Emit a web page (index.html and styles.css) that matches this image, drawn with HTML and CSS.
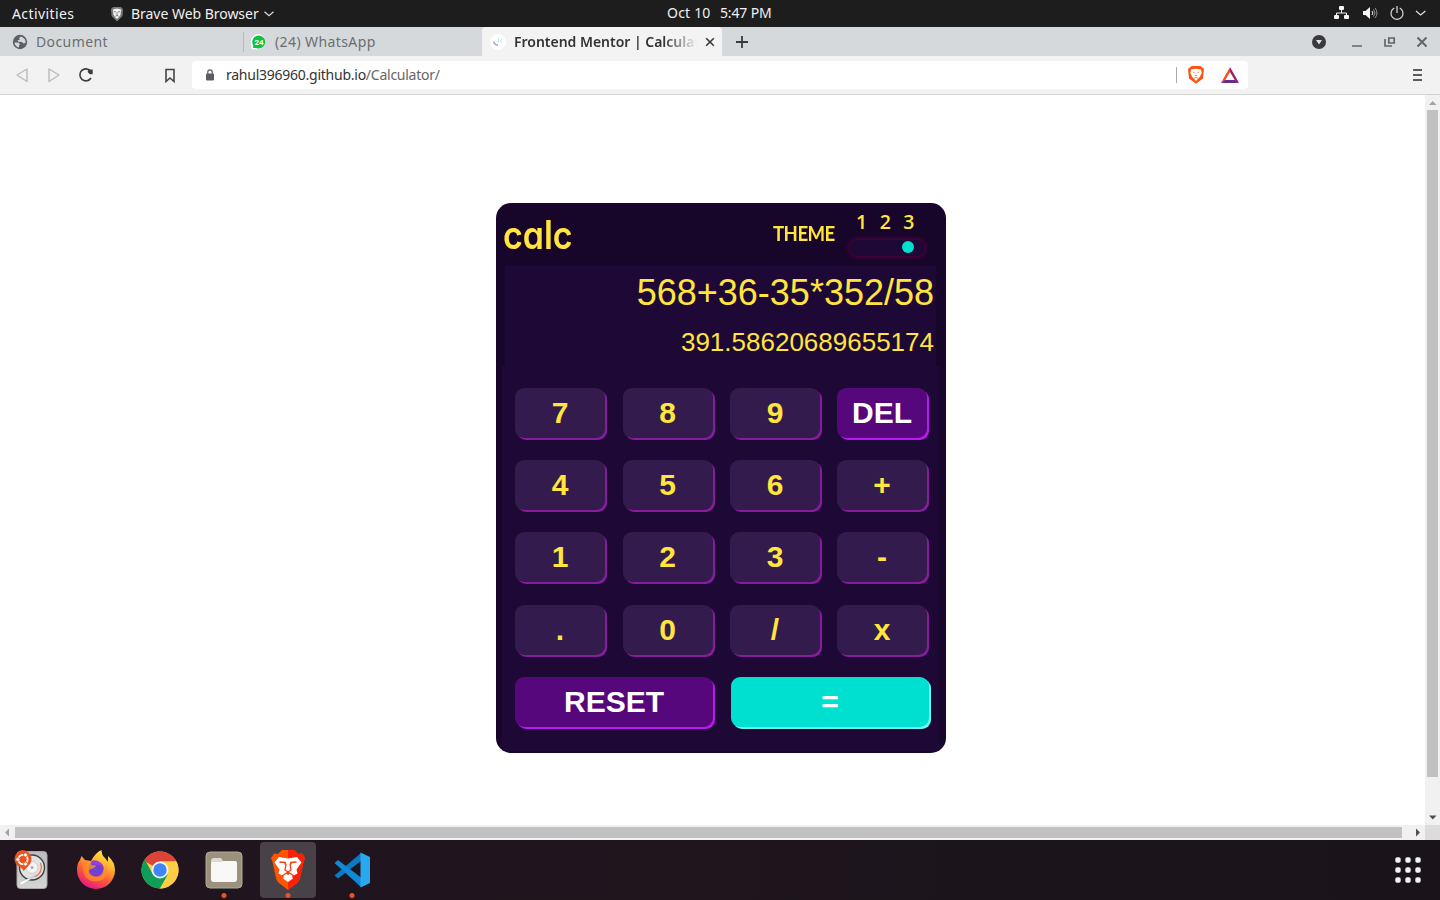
FILE: index.html
```html
<!DOCTYPE html>
<html lang="en">
<head>
<meta charset="utf-8">
<title>Frontend Mentor | Calculator app</title>
<link rel="stylesheet" href="styles.css">
</head>
<body>
<header class="topbar">
  <span class="activities">Activities</span>
  <svg class="app-icon" width="14" height="16" viewBox="0 0 14 16"><path d="M3 1h8l2 2-.5 7L7 15.500 1.500 10 1 3z" fill="#77797b"/><path d="M3 3.500 7 2.500l4 1-.5 5L9 11l-2 2-2-2-1.500-2.500z" fill="#f4f4f4"/><path d="M4 5.500l2 .5M10 5.500 8 6M7 6v3M5.300 10.300 7 9.300l1.700 1" stroke="#666" stroke-width=".8" fill="none"/></svg>
  <span class="app-name">Brave Web Browser</span>
  <svg class="app-chevron" width="10" height="6" viewBox="0 0 10 6"><path d="M.5.800 5 4.800 9.500.800" fill="none" stroke="#ddd" stroke-width="1.200"/></svg>
  <span class="clock"><span class="date">Oct 10</span><span class="time">5:47 PM</span></span>
  <svg class="tray" width="100" height="16" viewBox="0 0 100 16">
    <g fill="#f5f5f5"><rect x="6" y="0" width="5" height="4" rx="1"/><rect x="1" y="9" width="5" height="4" rx="1"/><rect x="11" y="9" width="5" height="4" rx="1"/><path d="M30 5h2.500L37 1v12l-4.500-4H30z"/></g>
    <path d="M8.500 4v3M3.500 9.500V7h10v2.500M39 5q1.800 2 0 4" fill="none" stroke="#f5f5f5"/><path d="M40.500 3.500q3 3.500 0 7M42 2q4 5 0 10" fill="none" stroke="#999"/>
    <path d="M61.300 2A6 6 0 1 0 66.700 2M64 0v7" fill="none" stroke="#ddd" stroke-width="1.200"/><path d="M83 5l4.700 4 4.700-4" fill="none" stroke="#ddd" stroke-width="1.300"/>
  </svg>
</header>

<nav class="tabs">
  <div class="tab tab-document">
    <svg width="16" height="16" viewBox="0 0 16 16"><circle cx="8" cy="8" r="7.200" fill="#5b6066"/><path d="M2.500 8.500h4l1.500 1.700-1 1.300v2q-4-.8-4.500-5zM8.500 2.500 7 4.500l1 1.500H5.500l1 1.700L10 8l1.500 1.500 2-.5q.8-5-5-6.500z" fill="#d5d8db"/></svg>
    <span class="tab-title t-document">Document</span>
  </div>
  <div class="tab tab-whatsapp">
    <svg width="16" height="16" viewBox="0 0 16 16"><path d="M8 .300A7.600 7.600 0 1 1 5 15.200H.500V11.500A7.600 7.600 0 0 1 8 .300z" fill="#fff"/><path d="M8 1.500A6.500 6.500 0 1 1 5 13.900l-3 .2.300-2.600A6.500 6.500 0 0 1 8 1.500z" fill="#0ec244"/><text x="8" y="10.800" text-anchor="middle" class="badge-text">24</text></svg>
    <span class="tab-title t-whatsapp">(24) WhatsApp</span>
  </div>
  <div class="tab tab-active">
    <svg width="16" height="16" viewBox="0 0 16 16"><circle cx="8" cy="8" r="8" fill="#fff"/><path d="M3.500 7.500Q4.500 11 8 11.200" fill="none" stroke="#9aa5dc" stroke-width="1.400"/><path d="M8.500 4.500v4M10 7l2-1.500M10 7l2 1.500" fill="none" stroke="#b8e2e8"/></svg>
    <span class="tab-title t-frontend">Frontend Mentor | Calculat</span>
    <svg class="tab-close" width="10" height="10" viewBox="0 0 10 10"><path d="M1.200 1.200l7.600 7.600M8.800 1.200 1.200 8.800" stroke="#3a3a3a" stroke-width="1.600"/></svg>
  </div>
  <svg class="new-tab" width="12" height="12" viewBox="0 0 12 12"><path d="M6 0v12M0 6h12" stroke="#3a3a3a" stroke-width="1.800"/></svg>
  <svg class="window-controls" width="120" height="16" viewBox="0 0 120 16">
    <circle cx="7" cy="8" r="7" fill="#3a3a3c"/><path d="M4 6h6l-3 4.500z" fill="#dfe2e5"/>
    <path d="M40 12h10M73 5v7h7M76.800 4h5.400v5h-5.400z" stroke="#646668" stroke-width="1.700" fill="none"/><path d="M105.500 3.500l9 9M114.500 3.500l-9 9" stroke="#646668" stroke-width="2"/>
  </svg>
</nav>

<div class="toolbar">
  <svg class="nav-icons" width="192" height="38" viewBox="0 0 192 38">
    <g fill="none" stroke="#bbb" stroke-width="1.400" stroke-linejoin="round"><path d="M27 13v12.500L17 19z"/><path d="M49 13v12.500L59 19z"/></g>
    <path d="M90.500 15A6 6 0 1 0 91 22" fill="none" stroke="#3d3d3d" stroke-width="1.600"/><path d="M88 16.500a2 2 0 0 1 2-3h2.700v4.700H90z" fill="#3d3d3d"/>
    <path d="M166 13.500h8v12l-4-3.500-4 3.500z" fill="none" stroke="#444" stroke-width="1.600"/>
  </svg>
  <div class="address">
    <svg width="8" height="12" viewBox="0 0 8 12"><rect y="4.500" width="8" height="7" rx="1" fill="#5a5d61"/><path d="M1.800 5V3a2.200 2.200 0 0 1 4.400 0v2" fill="none" stroke="#5a5d61" stroke-width="1.200"/></svg>
    <span class="url">rahul396960.github.io<span class="url-path">/Calculator/</span></span>
    <svg class="address-icons" width="64" height="20" viewBox="0 0 64 20">
      <path d="M.5 2v16" stroke="#aaa"/><path d="M15.500 1h9l3.500 3-1 9.500L20 18.800l-7-5.300L12 4z" fill="#fb5414"/><path d="M15 4.500l5-.7 5 .7.700 3.500-2 4-3.700 4-3.700-4-2-4z" fill="#fff"/><path d="M16.800 7l1.700.6M23.200 7l-1.700.6M18.800 10.500h2.400M18 13.500l2-1.500 2 1.500" stroke="#fb7a4a" stroke-width=".9" fill="none"/>
      <path d="M54 2 45 18l4-2.500 5-8.500z" fill="#ff4a1c"/><path d="M54 2l9 16-4-2.500-5-8.500z" fill="#9e1f63"/><path d="M45 18h18l-4-3H49z" fill="#662d91"/>
    </svg>
  </div>
  <svg class="menu" width="10" height="14" viewBox="0 0 10 14"><path d="M1 2h8M0 7h9M0 12h9" stroke="#5c5c5c" stroke-width="1.800"/><path d="M0 2h9" stroke="#5c5c5c" stroke-width="1.800"/></svg>
</div>

<main class="viewport">
  <div class="page">
    <section class="calculator">
      <div class="calc-header">
        <h1 class="logo">calc</h1>
        <span class="theme-label">THEME</span>
        <div class="theme">
          <div class="theme-numbers"><span>1</span><span>2</span><span>3</span></div>
          <div class="toggle"><span class="toggle-dot"></span></div>
        </div>
      </div>
      <div class="display">
        <div class="expression">568+36-35*352/58</div>
        <div class="result">391.58620689655174</div>
      </div>
      <div class="keypad">
        <button class="key">7</button><button class="key">8</button><button class="key">9</button><button class="key key-purple">DEL</button>
        <button class="key">4</button><button class="key">5</button><button class="key">6</button><button class="key">+</button>
        <button class="key">1</button><button class="key">2</button><button class="key">3</button><button class="key">-</button>
        <button class="key">.</button><button class="key">0</button><button class="key">/</button><button class="key">x</button>
        <button class="key key-purple key-wide">RESET</button><button class="key key-equals key-wide">=</button>
      </div>
    </section>
  </div>
  <div class="scroll-y">
    <svg width="15" height="15" viewBox="0 0 15 15"><path d="M4 10h7.500L7.750 6z" fill="#a3a3a3"/></svg>
    <div class="thumb-y"></div>
    <svg width="15" height="15" viewBox="0 0 15 15"><path d="M4 5.500h7.500L7.750 9.500z" fill="#505050"/></svg>
  </div>
  <div class="scroll-x">
    <svg width="15" height="15" viewBox="0 0 15 15"><path d="M9 3.500v8L5 7.500z" fill="#a3a3a3"/></svg>
    <div class="thumb-x"></div>
    <svg width="15" height="15" viewBox="0 0 15 15"><path d="M6 3.500v8L10 7.500z" fill="#505050"/></svg>
  </div>
  <div class="corner"></div>
</main>

<footer class="dock">
  <div class="dock-item"><svg width="56" height="56" viewBox="0 0 56 56">
    <defs><linearGradient id="disk" x2="0" y2="1"><stop stop-color="#bcbcbc"/><stop offset="1" stop-color="#d5d5d5"/></linearGradient></defs>
    <rect x="13" y="9.500" width="30" height="37" rx="3.500" fill="url(#disk)" stroke="#aaa"/>
    <circle cx="28" cy="25.500" r="12.500" fill="#e1e1e1" stroke="#3f4145" stroke-width="1.400"/><circle cx="28" cy="25.500" r="6" fill="#f4f4f4" stroke="#ccc"/><circle cx="28" cy="25.500" r="1.500" fill="#aaa"/>
    <path d="M36.500 21a10 10 0 0 1-5.500 13.500" fill="none" stroke="#ed764d" stroke-width="1.300"/><path d="M31 34 17 39.500q-3 3.500 1 3.500z" fill="#fff" stroke="#aaa" stroke-width=".5"/>
    <path d="M18.500 8a9 9 0 0 1 9 9q0 5-7 11l-1 1q-1-3-6-5.500A9 9 0 0 1 18.500 8z" fill="#e95420"/><circle cx="19" cy="17.500" r="4.600" fill="none" stroke="#fff" stroke-width="1.800"/><g fill="#fff" stroke="#e95420" stroke-width=".8"><circle cx="21.500" cy="13" r="2"/><circle cx="13.800" cy="17.500" r="2"/><circle cx="21.500" cy="22" r="2"/></g>
  </svg></div>
  <div class="dock-item"><svg width="56" height="56" viewBox="0 0 56 56">
    <defs><linearGradient id="fox" x1=".8" y1="0" x2=".3" y2="1"><stop stop-color="#fff44f"/><stop offset=".35" stop-color="#ffb02e"/><stop offset=".65" stop-color="#ff5a38"/><stop offset="1" stop-color="#e31587"/></linearGradient></defs>
    <path d="M33.500 8q0 5 3.500 8l3 4v-6q7 6 7 14a19 19 0 0 1-38 0q0-7 3-10l1.500-4 3.500 4 6 1q4-8 10.500-11z" fill="url(#fox)"/>
    <circle cx="28" cy="27" r="7.500" fill="#7142d2"/><path d="M22 20q4-3 8-1 6 3 6 9-3-6-8-5z" fill="#9a3be0"/>
    <path d="M15 22q6-2 9 1l4 .5q0 2-5 3.500-3 1-2 4.500 6 6 13 2 5-4 3-12 6 9-2 16-10 5-17-2-4-6-3-13.500z" fill="#ff9226" opacity=".75"/>
  </svg></div>
  <div class="dock-item"><svg width="56" height="56" viewBox="0 0 56 56">
    <circle cx="28" cy="28" r="18.500" fill="#ffcd43"/><path d="M28 28 12 18.700A18.500 18.500 0 0 1 44.500 19.500H28z" fill="#db4437"/><path d="M12.800 17.500A18.500 18.500 0 0 0 28 46.500l8-13.900L20.500 31.500z" fill="#109d58"/><path d="M36 32.600 28 46.500A18.500 18.500 0 0 0 44.500 19.500H28z" fill="#ffcd43"/>
    <circle cx="28" cy="28" r="8.500" fill="#f2f2f2"/><circle cx="28" cy="28" r="6.700" fill="#4285f4"/>
  </svg></div>
  <div class="dock-item"><svg width="56" height="56" viewBox="0 0 56 56">
    <rect x="10" y="10" width="36" height="36" rx="4" fill="#9b927e" stroke="#b1aa98"/><path d="M15 19q0-3 3-3h7l2 3h12l2 2v17H15z" fill="#e0dacf"/><path d="M15 22q0-2 2-2h8l3-1h11q2 0 2 2v16q0 3-3 3H18q-3 0-3-3z" fill="#f8f8f7"/><circle cx="28" cy="53.500" r="2.500" fill="#e95420"/>
  </svg></div>
  <div class="dock-item dock-selected"><svg width="56" height="56" viewBox="0 0 56 56">
    <path d="M22 8h12l4 4 4-.5 3 4.500-1.500 4-3.500 16q-1 4-5 6.500L28 48l-7-5.500q-4-2.500-5-6.500l-3.500-16-1.500-4 3-4.500 4 .5z" fill="#ff5500"/><path d="M28 8h6l4 4 4-.5 3 4.500-1.500 4-3.500 16q-1 4-5 6.500L28 48z" fill="#fb2006"/>
    <path d="M19 15l9 1.500L37 15l4.500 5.500-5 7 1 4-5.500 3 1 2-5 3.500-5-3.500 1-2-5.500-3 1-4-5-7z" fill="#fff"/>
    <path d="M19.500 20l5.500.5.500 2M36.500 20l-5.500.5-.5 2" fill="none" stroke="#fb3b10" stroke-width="1.700"/><path d="M26 22l-1 6 3 2 3-2-1-6" fill="none" stroke="#fb3b10" stroke-width="1.300"/><path d="M22 34l6-4 6 4M28 30v3" fill="none" stroke="#fb3b10" stroke-width="1.400"/><circle cx="28" cy="53.500" r="2.500" fill="#e95420"/>
  </svg></div>
  <div class="dock-item"><svg width="56" height="56" viewBox="0 0 56 56">
    <path d="M10.500 33.500l3.500 3 23-17.500V11z" fill="#0b78c4"/><path d="M10.500 21l3.500-3 23 17.500V45z" fill="#1088d4"/><path d="M36.500 10.500 46 15v26l-9.500 4.500z" fill="#28a9ef"/><circle cx="28" cy="53.500" r="2.500" fill="#e95420"/>
  </svg></div>
  <svg class="apps" width="26" height="26" viewBox="0 0 26 26" fill="#f2f2f2"><rect x=".3" y=".3" width="5.400" height="5.400" rx="1.800"/><rect x="10.300" y=".3" width="5.400" height="5.400" rx="1.800"/><rect x="20.300" y=".3" width="5.400" height="5.400" rx="1.800"/><rect x=".3" y="10.300" width="5.400" height="5.400" rx="1.800"/><rect x="10.300" y="10.300" width="5.400" height="5.400" rx="1.800"/><rect x="20.300" y="10.300" width="5.400" height="5.400" rx="1.800"/><rect x=".3" y="20.300" width="5.400" height="5.400" rx="1.800"/><rect x="10.300" y="20.300" width="5.400" height="5.400" rx="1.800"/><rect x="20.300" y="20.300" width="5.400" height="5.400" rx="1.800"/></svg>
</footer>
</body>
</html>
```

FILE: styles.css
```css
* { box-sizing: border-box; }
body { margin: 0; width: 1440px; height: 900px; overflow: hidden; display: flex; flex-direction: column; background: #fff; font: 14px/20px "Noto Sans", sans-serif; }
svg { display: block; flex: none; }
span { white-space: nowrap; }

.topbar { height: 27px; flex: none; display: flex; align-items: center; background: #1d1d1d; color: #f0f0f0; }
.activities { width: 98px; margin-left: 12px; letter-spacing: .4px; }
.app-name { width: 133px; margin-left: 7px; letter-spacing: -.03px; }
.app-chevron { margin-right: 393px; }
.clock { display: flex; width: 106px; margin-top: -1px; }
.date { width: 53px; letter-spacing: .2px; }
.time { letter-spacing: -.15px; }
.tray { margin-left: 560px; }

.tabs { height: 29px; flex: none; display: flex; align-items: center; background: #d5d9dc; color: #6b6e70; }
.tab { display: flex; align-items: center; height: 29px; }
.tab-title { font-size: 14px; }
.tab-document { width: 243px; padding-left: 12px; gap: 8px; }
.t-document { letter-spacing: .4px; }
.tab-whatsapp { width: 239px; height: 20px; padding-left: 7px; gap: 8px; border-left: 1px solid #b8bbbd; }
.t-whatsapp { letter-spacing: .4px; }
.tab-active { width: 240px; padding-left: 8px; gap: 8px; background: #f3f3f3; border-radius: 4px 4px 0 0; }
.t-frontend { width: 183px; color: #333; font-weight: 600; letter-spacing: -.02px; -webkit-mask-image: linear-gradient(90deg, #000 150px, transparent 183px); mask-image: linear-gradient(90deg, #000 150px, transparent 183px); }
.badge-text { font: bold 8px Roboto, sans-serif; fill: #fff; }
.new-tab { margin-left: 14px; }
.window-controls { margin-left: 564px; }

.toolbar { height: 39px; flex: none; display: flex; align-items: center; background: #f2f2f2; border-bottom: 1px solid #d5d5d5; }
.address { width: 1056px; height: 28px; display: flex; align-items: center; padding-left: 14px; background: #fff; border-radius: 4px; }
.url { margin-left: 12px; width: 950px; color: #333; letter-spacing: -.25px; }
.url-path { color: #666; }
.menu { margin-left: 165px; }

.viewport { height: 745px; flex: none; display: grid; grid-template-columns: 1425px 15px; grid-template-rows: 730px 15px; }
.page { padding: 108px 0 0 496px; }
.scroll-y { display: flex; flex-direction: column; align-items: center; justify-content: space-between; background: #f1f1f1; }
.thumb-y { width: 11px; height: 667px; margin-bottom: auto; background: #c1c1c1; }
.scroll-x { display: flex; align-items: center; background: #f1f1f1; }
.thumb-x { width: 1387px; height: 11px; margin-right: 8px; background: #c1c1c1; }
.corner { background: #dcdcdc; }

.calculator { width: 450px; height: 550px; overflow: hidden; background: #17062a; border-radius: 15px; color: #ffe53d; }
.calc-header { height: 63px; display: flex; }
.logo { width: 270px; margin: 7px 0 0 7px; font: 600 39px/50px Inter, sans-serif; font-feature-settings: "cv11"; transform: scaleX(.87); transform-origin: left; }
.theme-label { width: 76px; padding-top: 15px; font: 700 20px/30px Lato, sans-serif; letter-spacing: -.6px; transform: scaleX(.93); transform-origin: left; }
.theme { width: 80px; padding-top: 9px; }
.theme-numbers { display: flex; gap: 12.500px; padding-left: 7px; font: 600 19.500px/20px "Open Sans", sans-serif; }
.toggle { width: 75px; height: 16px; margin: 8px 0 0 1px; padding: 1px 0 0 52px; background: #1e0936; border-radius: 9px; box-shadow: 0 0 5px 1px #5c0048; }
.toggle-dot { display: block; width: 12px; height: 12px; border-radius: 50%; background: #00e0d1; }
.display { width: 431px; height: 100px; margin-left: 9px; padding: 5px 2px 0 0; background: #1e0936; text-align: right; font-family: "Liberation Sans", sans-serif; }
.expression { font-size: 36px; line-height: 44px; }
.result { font-size: 26px; line-height: 30px; margin-top: 12px; }
.keypad { width: 437px; height: 385px; margin-left: 6px; padding: 22px 0 0 13px; display: grid; grid-template-columns: 90.600px 90.400px 90px 90px; grid-auto-rows: 50px; gap: 22.200px 17px; background: #1e0936; }
.key { width: 90px; padding: 0; border: 0; border-radius: 9px; background: #331c4d; box-shadow: 2px 2px #881c9c; color: #ffe53d; font: bold 30px/50px "Liberation Sans", sans-serif; }
.key-purple { background: #56077c; box-shadow: 2px 2px #be15f4; color: #fff; }
.key-equals { background: #00e0d1; box-shadow: 2px 2px #6cf9f1; color: #fff; }
.key-wide { grid-column: span 2; width: 198px; }
.key-equals { margin-left: 1px; }

.dock { height: 60px; flex: none; display: flex; gap: 8px; padding: 2px 0 0 4px; background: #1f141e linear-gradient(90deg, #21151f, #1a141a); }
.dock-item { width: 56px; height: 56px; border-radius: 4px; }
.dock-selected { background: #484148; }
.apps { margin: 15px 19px 0 auto; }
```
